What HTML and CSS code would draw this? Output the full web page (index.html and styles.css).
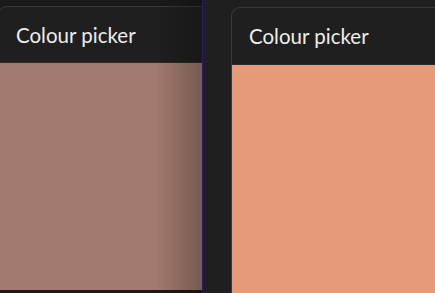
FILE: index.html
```html
<html>
<head>
    <link rel="stylesheet" href="styles.css">
</head>
<body>

<div class="pane pane-left">
    <div class="card card-left">
        <div class="card-head">Colour picker</div>
        <div class="swatch swatch-muted"></div>
    </div>
</div>

<div class="pane pane-right">
    <div class="card card-right">
        <div class="card-head">Colour picker</div>
        <div class="swatch swatch-peach"></div>
    </div>
</div>

</body>
</html>
```

FILE: styles.css
```css
html, body { margin: 0; padding: 0; }
body { display: flex; width: 435px; height: 293px; overflow: hidden; background: #1f1f1f; font-family: Lato, "Open Sans", sans-serif; }

.pane { position: relative; height: 293px; overflow: hidden; }
.pane-left { width: 202px; border-right: 1px solid #2c1a6a; background: #1a1a1a; }
.pane-left::after { content: ""; position: absolute; top: 0; right: 0; bottom: 0; width: 46px; background: linear-gradient(to right, rgba(0,0,0,0), rgba(0,0,0,0.26)); }
.pane-right { flex: 1; padding: 7px 0 0 231px; margin-left: -203px; }

.card { display: flex; flex-direction: column; width: 260px; background: #1f1f1f; border: 1px solid #3a3a3a; border-radius: 9px 9px 0 0; overflow: hidden; }
.card-left { margin: 6px 0 0 -2px; height: 283px; border-bottom-color: #1a1a1a; }
.card-right { height: 300px; }

.card-head { height: 55px; padding-left: 17px; line-height: 56px; font-size: 20.5px; color: #ececec; border-bottom: 1px solid #2b2d2d; }
.pane-right .card-head { height: 56px; line-height: 57px; }
.swatch { flex: 1; }
.swatch-muted { background: #a07a6c; }
.swatch-peach { background: #e69a79; }
```
